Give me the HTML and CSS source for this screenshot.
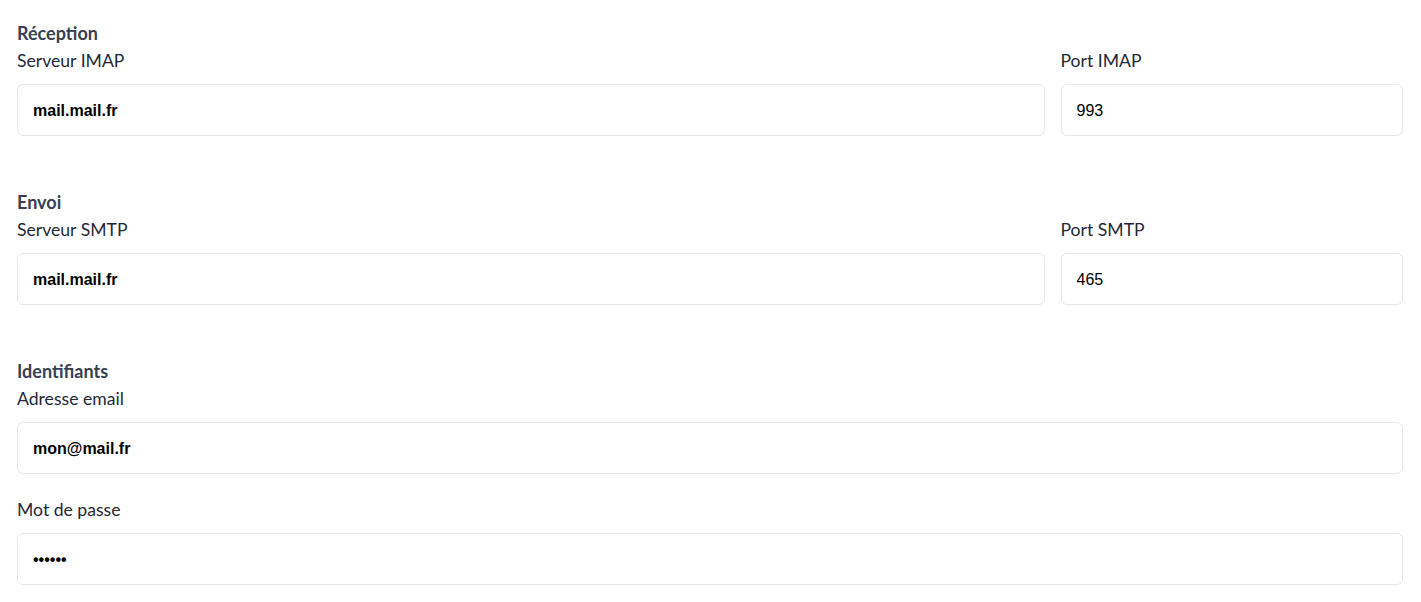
FILE: index.html
```html
<!DOCTYPE html>
<html lang="fr">
<head>
<meta charset="utf-8">
<title>Paramètres mail</title>
<link rel="stylesheet" href="styles.css">
</head>
<body>
<form class="settings">
  <section class="section">
    <h3 class="section-title">Réception</h3>
    <div class="row row-split">
      <div class="field">
        <label class="label">Serveur IMAP</label>
        <input class="input input-strong" type="text" value="mail.mail.fr">
      </div>
      <div class="field">
        <label class="label">Port IMAP</label>
        <input class="input" type="text" value="993">
      </div>
    </div>
  </section>
  <section class="section">
    <h3 class="section-title">Envoi</h3>
    <div class="row row-split">
      <div class="field">
        <label class="label">Serveur SMTP</label>
        <input class="input input-strong" type="text" value="mail.mail.fr">
      </div>
      <div class="field">
        <label class="label">Port SMTP</label>
        <input class="input" type="text" value="465">
      </div>
    </div>
  </section>
  <section class="section">
    <h3 class="section-title">Identifiants</h3>
    <div class="stack">
      <div class="field">
        <label class="label">Adresse email</label>
        <input class="input input-strong" type="text" value="mon@mail.fr">
      </div>
      <div class="field">
        <label class="label">Mot de passe</label>
        <input class="input input-strong" type="password" value="secret">
      </div>
    </div>
  </section>
</form>
</body>
</html>
```
FILE: styles.css
```css
* { box-sizing: border-box; }
html, body { margin: 0; background: #ffffff; }
body { font-family: Lato, "Noto Sans", sans-serif; }
.settings {
  padding: 21px 18px 0 17px;
  display: flex;
  flex-direction: column;
  gap: 54px;
}
.section { display: flex; flex-direction: column; }
.section-title {
  margin: 0 0 4px;
  font-size: 18px;
  line-height: 24px;
  font-weight: 700;
  color: #374151;
}
.row-split {
  display: grid;
  grid-template-columns: 3fr 1fr;
  gap: 16px;
}
.stack { display: flex; flex-direction: column; gap: 24px; }
.field { display: flex; flex-direction: column; }
.label {
  font-size: 17.6px;
  line-height: 24px;
  color: #1f2937;
  margin-bottom: 11px;
}
.input {
  height: 52px;
  width: 100%;
  border: 1px solid #e5e7eb;
  border-radius: 6px;
  padding: 2px 16px 0 15px;
  font-family: "Liberation Sans", Arial, sans-serif;
  font-size: 16px;
  color: #000000;
  background: #ffffff;
  outline: none;
}
.input-strong { font-weight: 700; }
```
